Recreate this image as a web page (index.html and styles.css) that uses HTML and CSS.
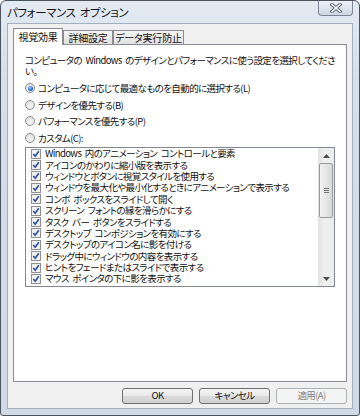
FILE: index.html
```html
<!DOCTYPE html>
<html lang="ja">
<head>
<meta charset="utf-8">
<title>パフォーマンス オプション</title>
<link rel="stylesheet" href="styles.css">
</head>
<body>
<div class="window">
  <div class="titlebar">
    <span class="title">パフォーマンス オプション</span>
    <div class="close">
      <svg width="14" height="10" viewBox="0 0 14 10">
        <path d="M3 1.5 L11 8.5 M11 1.5 L3 8.5" stroke="#5d6a7b" stroke-width="3.4" stroke-linecap="square" fill="none"/>
        <path d="M3 1.5 L11 8.5 M11 1.5 L3 8.5" stroke="#f4f6f9" stroke-width="1.6" stroke-linecap="square" fill="none"/>
      </svg>
    </div>
  </div>
  <div class="client">
    <div class="tabs">
      <div class="tab active tab-w1">視覚効果</div>
      <div class="tab tab-w1">詳細設定</div>
      <div class="tab tab-w2">データ実行防止</div>
    </div>
    <div class="panel">
      <p class="desc">コンピュータの Windows のデザインとパフォーマンスに使う設定を選択してくださ<br>い。</p>
      <div class="radios">
        <div class="radio-row"><span class="radio"><span class="dot"></span></span><span>コンピュータに応じて最適なものを自動的に選択する(L)</span></div>
        <div class="radio-row"><span class="radio"></span><span>デザインを優先する(B)</span></div>
        <div class="radio-row"><span class="radio"></span><span>パフォーマンスを優先する(P)</span></div>
        <div class="radio-row"><span class="radio"></span><span>カスタム(C):</span></div>
      </div>
      <div class="listbox">
        <div class="items">
          <div class="item"><span class="check"></span><span>Windows 内のアニメーション コントロールと要素</span></div>
          <div class="item"><span class="check"></span><span>アイコンのかわりに縮小版を表示する</span></div>
          <div class="item"><span class="check"></span><span>ウィンドウとボタンに視覚スタイルを使用する</span></div>
          <div class="item"><span class="check"></span><span>ウィンドウを最大化や最小化するときにアニメーションで表示する</span></div>
          <div class="item"><span class="check"></span><span>コンボ ボックスをスライドして開く</span></div>
          <div class="item"><span class="check"></span><span>スクリーン フォントの縁を滑らかにする</span></div>
          <div class="item"><span class="check"></span><span>タスク バー ボタンをスライドする</span></div>
          <div class="item"><span class="check"></span><span>デスクトップ コンポジションを有効にする</span></div>
          <div class="item"><span class="check"></span><span>デスクトップのアイコン名に影を付ける</span></div>
          <div class="item"><span class="check"></span><span>ドラッグ中にウィンドウの内容を表示する</span></div>
          <div class="item"><span class="check"></span><span>ヒントをフェードまたはスライドで表示する</span></div>
          <div class="item"><span class="check"></span><span>マウス ポインタの下に影を表示する</span></div>
        </div>
        <div class="scrollbar">
          <div class="sb-btn"><svg width="7" height="4" viewBox="0 0 7 4"><path d="M0 4 L3.5 0 L7 4 Z" fill="#4d4d4d"/></svg></div>
          <div class="sb-thumb"><span class="grip"></span><span class="grip"></span><span class="grip"></span></div>
          <div class="sb-track"></div>
          <div class="sb-btn"><svg width="7" height="4" viewBox="0 0 7 4"><path d="M0 0 L3.5 4 L7 0 Z" fill="#4d4d4d"/></svg></div>
        </div>
      </div>
    </div>
    <div class="buttons">
      <div class="btn">OK</div>
      <div class="btn">キャンセル</div>
      <div class="btn disabled">適用(A)</div>
    </div>
  </div>
</div>
</body>
</html>
```

FILE: styles.css
```css
html, body {
  margin: 0;
  padding: 0;
}
body {
  width: 360px;
  height: 416px;
  overflow: hidden;
  background: #ffffff;
  font-family: "Noto Sans CJK JP", "Noto Sans", sans-serif;
  font-size: 9.5px;
  letter-spacing: -0.6px;
  word-spacing: 2px;
  font-feature-settings: "palt";
  color: #111;
}
.window {
  box-sizing: border-box;
  width: 360px;
  height: 416px;
  border: 1px solid #4a5360;
  border-radius: 6px 6px 3px 3px;
  background: linear-gradient(#e3eaf2, #d4dfea 80px, #cfdae6);
  padding: 0 6px 6px;
  display: flex;
  flex-direction: column;
  position: relative;
}
.titlebar {
  height: 22px;
  display: flex;
  align-items: center;
}
.title {
  font-size: 11.5px;
  letter-spacing: -0.4px;
  line-height: 1;
  color: #111;
  padding-top: 1px;
}
.close {
  position: absolute;
  top: 0;
  right: 6px;
  width: 35px;
  height: 15px;
  box-sizing: border-box;
  border: 1px solid #7d8796;
  border-top: none;
  border-radius: 0 0 4px 4px;
  background: linear-gradient(#f1f4f8, #dce4ed 55%, #cdd8e4);
  display: flex;
  align-items: center;
  justify-content: center;
}
.client {
  flex: 1;
  border: 1px solid #a3b0bf;
  background: #f0f0f0;
  padding: 4px 5px;
  display: flex;
  flex-direction: column;
}
.tabs {
  display: flex;
  height: 16px;
  align-items: flex-end;
  position: relative;
  z-index: 1;
}
.tab {
  box-sizing: border-box;
  height: 14px;
  border: 1px solid #898c95;
  border-bottom: none;
  background: linear-gradient(#f5f5f5, #e1e1e1);
  display: flex;
  align-items: center;
  justify-content: center;
  font-size: 10px;
  letter-spacing: -0.2px;
  line-height: 1;
  white-space: nowrap;
}
.tab-w1 { width: 50px; }
.tab-w2 { width: 71px; }
.tab.active {
  height: 17px;
  margin-bottom: -1px;
  background: #ffffff;
}
.panel {
  flex: 1;
  border: 1px solid #898c95;
  background: #ffffff;
  padding: 10px 11px 0;
}
.desc {
  margin: 0;
  line-height: 10.5px;
  white-space: nowrap;
}
.radios {
  margin-top: 4px;
}
.radio-row {
  height: 16.5px;
  display: flex;
  align-items: center;
  gap: 3px;
  white-space: nowrap;
}
.radio {
  box-sizing: border-box;
  width: 10px;
  height: 10px;
  border: 1px solid #8a8c8f;
  border-radius: 50%;
  background: radial-gradient(circle at 60% 65%, #f4f4f4, #dcdcdc);
  display: flex;
  align-items: center;
  justify-content: center;
}
.dot {
  width: 5px;
  height: 5px;
  border-radius: 50%;
  background: radial-gradient(circle at 40% 35%, #9fd3ff, #2369c9 60%, #123f8a);
}
.listbox {
  box-sizing: border-box;
  width: 310px;
  height: 140px;
  margin-top: 1px;
  border: 1px solid #828790;
  display: flex;
  background: #fff;
}
.items {
  flex: 1;
  overflow: hidden;
  padding-left: 5px;
}
.item {
  height: 11.4px;
  display: flex;
  align-items: center;
  gap: 4px;
  white-space: nowrap;
  line-height: 11px;
}
.check {
  flex: none;
  box-sizing: border-box;
  width: 10px;
  height: 10px;
  border: 1px solid #8e8f8f;
  background-color: #f0f0f0;
  background-image: url("data:image/svg+xml,%3Csvg xmlns='http://www.w3.org/2000/svg' width='8' height='8' viewBox='0 0 8 8'%3E%3Cpath d='M1.3 4 L3.2 6.2 L6.8 1.2' stroke='%232b4e9b' stroke-width='1.6' fill='none'/%3E%3C/svg%3E");
  background-repeat: no-repeat;
  background-position: center;
}
.scrollbar {
  width: 16px;
  display: flex;
  flex-direction: column;
  background: linear-gradient(90deg, #e2e2e2, #f0f0f0 40%, #ececec);
}
.sb-btn {
  height: 15px;
  display: flex;
  align-items: center;
  justify-content: center;
}
.sb-thumb {
  box-sizing: border-box;
  height: 55px;
  margin: 0 1px;
  border: 1px solid #999999;
  border-radius: 2px;
  background: linear-gradient(90deg, #f3f3f3, #e6e6e6 50%, #d8d8d8);
  display: flex;
  flex-direction: column;
  align-items: center;
  justify-content: center;
  gap: 1px;
}
.grip {
  width: 5px;
  height: 1px;
  background: #777;
}
.sb-track {
  flex: 1;
}
.buttons {
  display: flex;
  justify-content: flex-end;
  gap: 6px;
  margin-top: 6px;
}
.btn {
  box-sizing: border-box;
  width: 71px;
  height: 16px;
  border: 1px solid #707070;
  border-radius: 3px;
  background: linear-gradient(#f3f3f3, #ebebeb 45%, #dddddd 50%, #cfcfcf);
  display: flex;
  align-items: center;
  justify-content: center;
  line-height: 1;
}
.btn.disabled {
  border-color: #adb2b5;
  background: #f4f4f4;
  color: #838383;
}
```
